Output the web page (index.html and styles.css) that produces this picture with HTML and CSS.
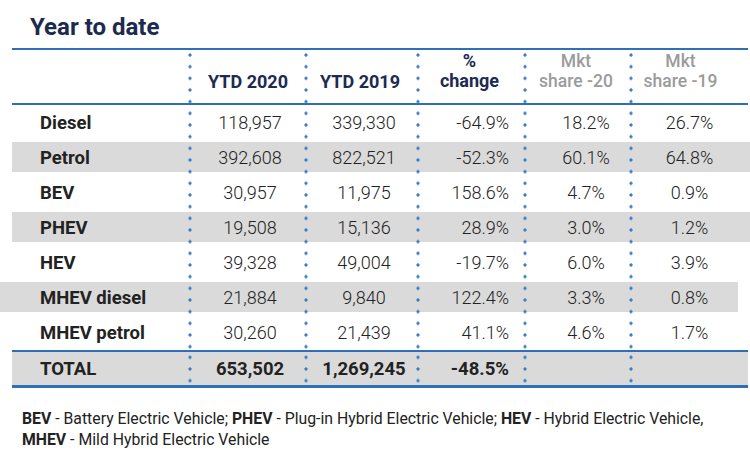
FILE: index.html
```html
<!DOCTYPE html>
<html>
<head>
<meta charset="utf-8">
<link rel="stylesheet" href="styles.css">
</head>
<body>
<h1 class="title">Year to date</h1>
<div class="table">
  <div class="row head">
    <div class="cell label"></div>
    <div class="cell c2"><span>YTD 2020</span></div>
    <div class="cell c3"><span>YTD 2019</span></div>
    <div class="cell c4"><span>%<br>change</span></div>
    <div class="cell c5 muted"><span>Mkt<br>share -20</span></div>
    <div class="cell c6 muted"><span>Mkt<br>share -19</span></div>
  </div>
  <div class="row body">
    <div class="cell label">Diesel</div>
    <div class="cell c2">118,957</div><div class="cell c3">339,330</div><div class="cell c4">-64.9%</div><div class="cell c5">18.2%</div><div class="cell c6">26.7%</div>
  </div>
  <div class="row body grey">
    <div class="cell label">Petrol</div>
    <div class="cell c2">392,608</div><div class="cell c3">822,521</div><div class="cell c4">-52.3%</div><div class="cell c5">60.1%</div><div class="cell c6">64.8%</div>
  </div>
  <div class="row body">
    <div class="cell label">BEV</div>
    <div class="cell c2">30,957</div><div class="cell c3">11,975</div><div class="cell c4">158.6%</div><div class="cell c5">4.7%</div><div class="cell c6">0.9%</div>
  </div>
  <div class="row body grey">
    <div class="cell label">PHEV</div>
    <div class="cell c2">19,508</div><div class="cell c3">15,136</div><div class="cell c4">28.9%</div><div class="cell c5">3.0%</div><div class="cell c6">1.2%</div>
  </div>
  <div class="row body">
    <div class="cell label">HEV</div>
    <div class="cell c2">39,328</div><div class="cell c3">49,004</div><div class="cell c4">-19.7%</div><div class="cell c5">6.0%</div><div class="cell c6">3.9%</div>
  </div>
  <div class="row body grey shifted">
    <div class="cell label">MHEV diesel</div>
    <div class="cell c2">21,884</div><div class="cell c3">9,840</div><div class="cell c4">122.4%</div><div class="cell c5">3.3%</div><div class="cell c6">0.8%</div>
  </div>
  <div class="row body">
    <div class="cell label">MHEV petrol</div>
    <div class="cell c2">30,260</div><div class="cell c3">21,439</div><div class="cell c4">41.1%</div><div class="cell c5">4.6%</div><div class="cell c6">1.7%</div>
  </div>
  <div class="row total">
    <div class="cell label">TOTAL</div>
    <div class="cell c2">653,502</div><div class="cell c3">1,269,245</div><div class="cell c4">-48.5%</div><div class="cell c5"></div><div class="cell c6"></div>
  </div>
</div>
<p class="note"><b>BEV</b> - Battery Electric Vehicle; <b>PHEV</b> - Plug-in Hybrid Electric Vehicle; <b>HEV</b> - Hybrid Electric Vehicle,<br><b>MHEV</b> - Mild Hybrid Electric Vehicle</p>
</body>
</html>
```

FILE: styles.css
```css
html, body {
  margin: 0;
  padding: 0;
  background: #ffffff;
}
body {
  width: 750px;
  height: 454px;
  overflow: hidden;
  font-family: Roboto, "Liberation Sans", sans-serif;
  color: #333333;
}
.title {
  margin: 0 0 7px 30px;
  padding-top: 13px;
  font-size: 24px;
  line-height: 28px;
  font-weight: 700;
  color: #1d2a4f;
}
.table {
  margin-left: 12px;
  width: 736px;
  border-top: 2px solid #2d70b6;
  border-bottom: 3px solid #2d70b6;
}
.row {
  display: grid;
  grid-template-columns: 176px 116px 112px 107px 106px 119px;
  --dot-y: 2.5px;
}
.cell {
  display: flex;
  align-items: center;
  justify-content: center;
  background-image: radial-gradient(circle at 2px 50%, #3b7ec4 1.3px, rgba(59,126,196,0) 1.9px);
  background-size: 4px 11.667px;
  background-repeat: repeat-y;
  background-position: 0 var(--dot-y);
}
.cell.label {
  background-image: none;
  justify-content: flex-start;
  padding-left: 28px;
  font-weight: 700;
  font-size: 18.5px;
  color: #222222;
}
.head {
  height: 53px;
  border-bottom: 2px solid #2d70b6;
  --dot-y: -0.8px;
}
.head .cell {
  align-items: flex-end;
  padding-bottom: 12px;
  font-weight: 700;
  font-size: 18px;
  line-height: 19px;
  color: #1d2a52;
  text-align: center;
}
.head .cell.c4 {
  line-height: 20px;
}
.head .cell.muted {
  font-weight: 500;
  font-size: 17.5px;
  line-height: 20px;
  color: #9b9b9b;
}
.head .c2 { padding-left: 4px; }
.head .c3 { padding-left: 0; }
.head .c6 { padding-right: 16px; }
.body {
  height: 35px;
  font-size: 18px;
  font-weight: 300;
  color: #222222;
}
.body .c2, .total .c2 { padding-left: 8px; }
.body .c3, .total .c3 { padding-left: 8px; }
.body .c4, .total .c4 { justify-content: flex-end; padding-right: 14px; }
.body .c5 { padding-left: 20px; }
.body .c6 { padding-left: 2px; }
.grey {
  background: linear-gradient(#dadada, #dadada) 0 2px / 100% 30px no-repeat;
  margin-right: -2px;
}
.shifted {
  margin-left: -12px;
  padding-left: 12px;
  margin-right: 10px;
}
.total {
  height: 33px;
  border-top: 2px solid #2d70b6;
  background: #dadada;
  font-size: 18.5px;
  font-weight: 700;
  color: #222222;
  --dot-y: -0.5px;
}
.note {
  margin: 20px 0 0 22px;
  font-size: 15.8px;
  line-height: 21px;
  color: #222222;
}
.note b {
  font-weight: 700;
}
```
